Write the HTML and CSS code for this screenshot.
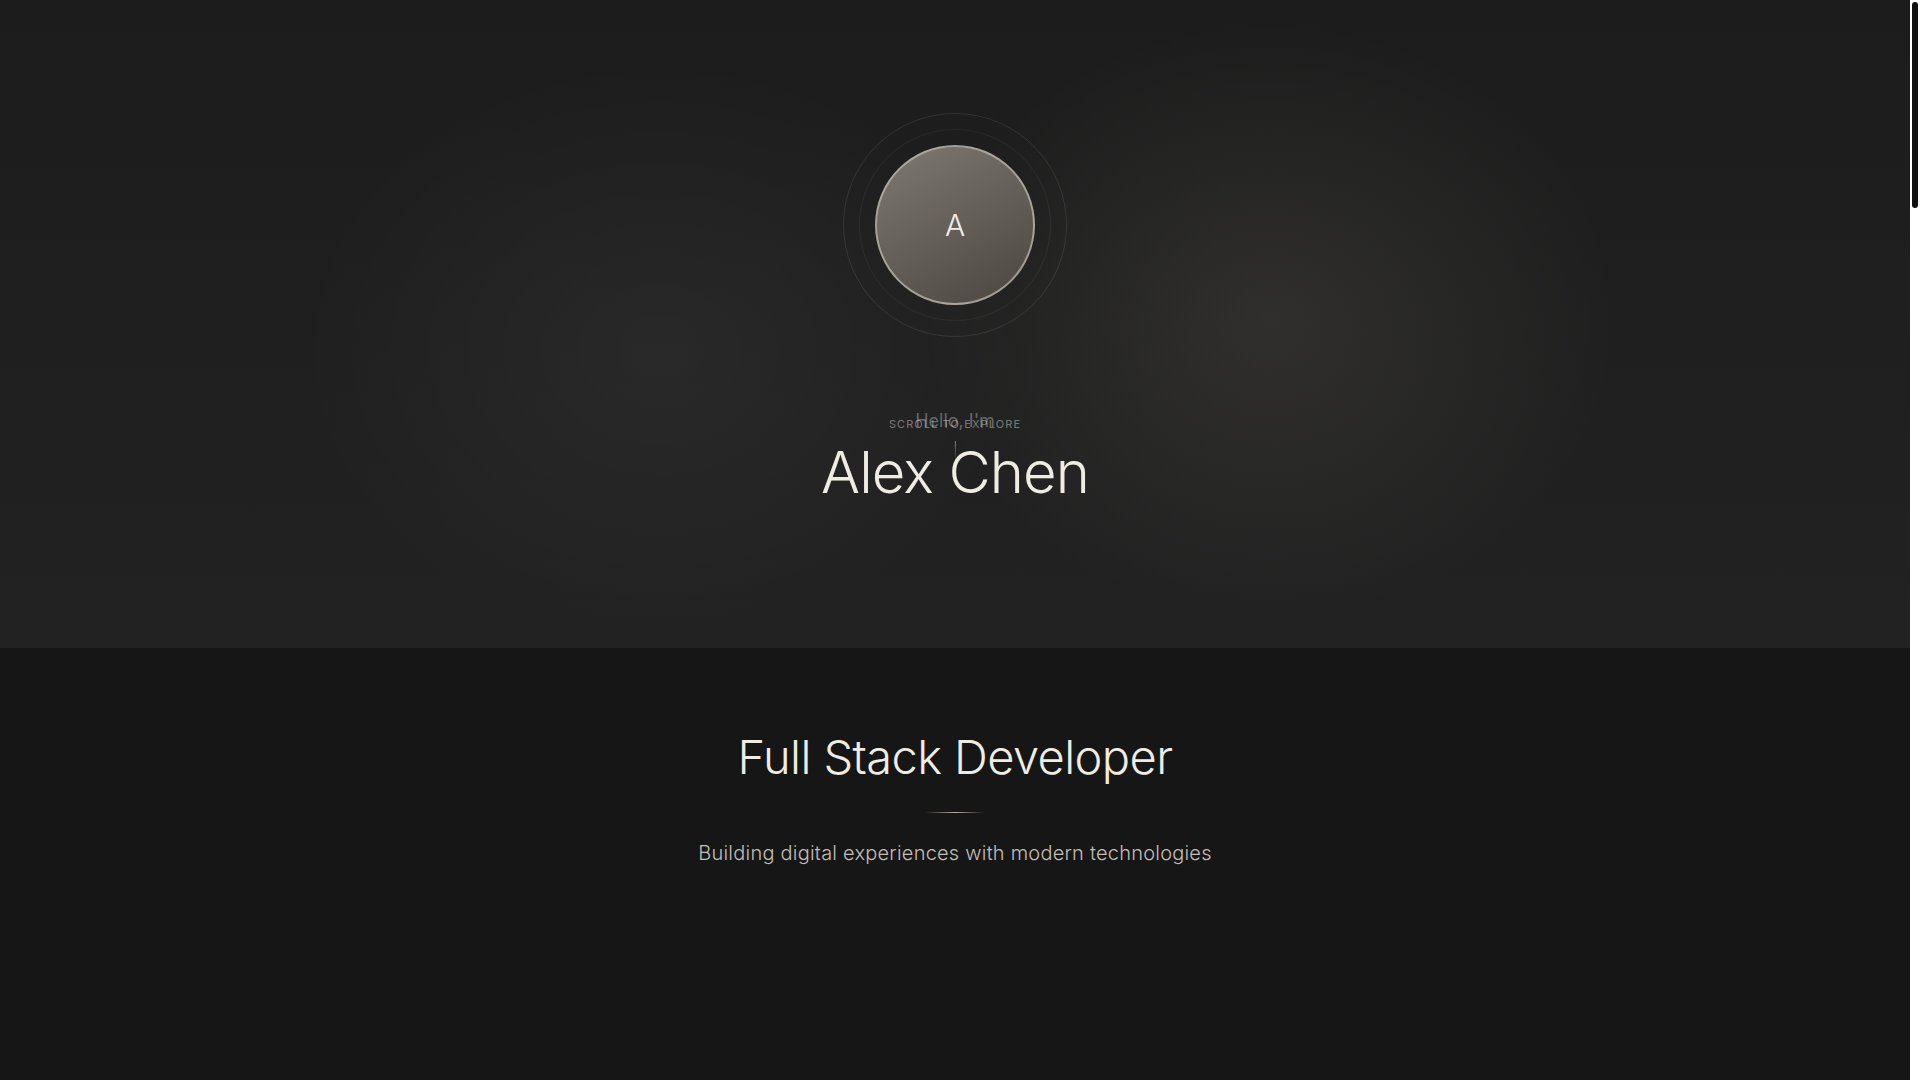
FILE: index.html
```html
<!DOCTYPE html>
<html lang="en">
<head>
<meta charset="utf-8">
<title>Alex Chen</title>
<link rel="stylesheet" href="styles.css">
</head>
<body>
<main class="page">
  <section class="hero">
    <div class="avatar-wrap">
      <div class="ring ring-outer"></div>
      <div class="ring ring-inner"></div>
      <div class="avatar">A</div>
    </div>
    <p class="hello">Hello, I'm</p>
    <h1 class="name">Alex Chen</h1>
    <div class="scroll-indicator">
      <span class="scroll-text">Scroll to explore</span>
      <span class="scroll-line"></span>
    </div>
  </section>
  <section class="intro">
    <h2 class="role">Full Stack Developer</h2>
    <div class="divider"></div>
    <p class="tagline">Building digital experiences with modern technologies</p>
  </section>
  <section class="filler"></section>
</main>
<div class="scrollbar"><div class="scrollbar-thumb"></div></div>
</body>
</html>
```
FILE: styles.css
```css
html, body {
  margin: 0;
  padding: 0;
}
html {
  scrollbar-width: none;
}
::-webkit-scrollbar {
  width: 0;
  height: 0;
}
body {
  background: #161616;
  font-family: Inter, "Noto Sans", sans-serif;
  color: #efece3;
}
.page {
  display: block;
  margin-right: 10px;
}
.scrollbar {
  position: fixed;
  top: 0;
  right: 0;
  width: 10px;
  height: 100vh;
  background: #ffffff;
}
.scrollbar-thumb {
  margin: 2px 2px 0;
  width: 6px;
  height: 206px;
  border-radius: 3px;
  background: #111111;
}
.hero {
  position: relative;
  height: 648px;
  box-sizing: border-box;
  padding-top: 113px;
  display: flex;
  flex-direction: column;
  align-items: center;
  background:
    radial-gradient(ellipse 520px 420px at 660px 350px, rgba(255,255,255,0.045), rgba(255,255,255,0) 70%),
    radial-gradient(ellipse 500px 430px at 1270px 320px, rgba(255,245,225,0.075), rgba(255,245,225,0) 70%),
    linear-gradient(180deg, #1c1c1c 0%, #222222 100%);
}
.avatar-wrap {
  position: relative;
  width: 224px;
  height: 224px;
  flex: none;
}
.ring {
  position: absolute;
  border-radius: 50%;
  box-sizing: border-box;
}
.ring-outer {
  inset: 0;
  border: 1px solid rgba(255,255,255,0.09);
}
.ring-inner {
  inset: 16px;
  border: 1px solid rgba(255,255,255,0.055);
}
.avatar {
  position: absolute;
  inset: 32px;
  border-radius: 50%;
  box-sizing: border-box;
  border: 2px solid rgba(190,184,172,0.75);
  background: linear-gradient(150deg, #7e7a73 0%, #646059 50%, #4a463f 100%);
  display: flex;
  align-items: center;
  justify-content: center;
  font-size: 30px;
  font-weight: 300;
  color: #efece6;
}
.hello {
  margin: 72px 0 0;
  font-size: 18px;
  line-height: 24px;
  font-weight: 400;
  color: rgba(255,255,255,0.33);
}
.name {
  margin: 6px 0 0;
  font-size: 58px;
  line-height: 66px;
  font-weight: 300;
  letter-spacing: -0.9px;
  color: #efece3;
}
.scroll-indicator {
  position: absolute;
  left: 50%;
  top: 417px;
  transform: translateX(-50%);
  display: flex;
  flex-direction: column;
  align-items: center;
  gap: 10px;
}
.scroll-text {
  font-size: 11px;
  line-height: 14px;
  letter-spacing: 1.1px;
  text-transform: uppercase;
  color: rgba(255,255,255,0.4);
  white-space: nowrap;
}
.scroll-line {
  width: 1px;
  height: 20px;
  background: linear-gradient(180deg, rgba(255,255,255,0.45), rgba(255,255,255,0));
}
.intro {
  padding-top: 80px;
  display: flex;
  flex-direction: column;
  align-items: center;
}
.role {
  margin: 0;
  font-size: 47px;
  line-height: 58px;
  font-weight: 300;
  letter-spacing: -0.6px;
  color: #efece3;
}
.divider {
  margin-top: 26px;
  width: 60px;
  height: 1px;
  background: linear-gradient(90deg, rgba(180,170,150,0), rgba(200,190,170,0.9), rgba(180,170,150,0));
}
.tagline {
  margin: 25px 0 0;
  font-size: 20px;
  line-height: 30px;
  font-weight: 300;
  letter-spacing: 0.22px;
  color: #c2beb6;
}
.filler {
  height: 4700px;
}
```
